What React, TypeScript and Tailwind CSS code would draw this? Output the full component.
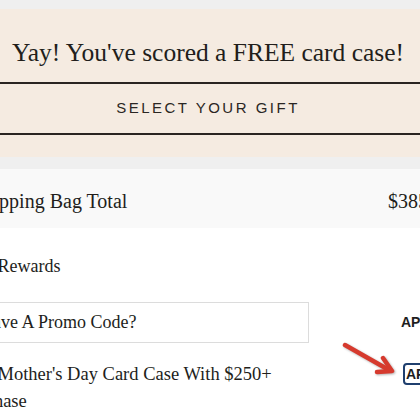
export default function App() {
  return (
    <div className="relative h-[420px] w-[420px] overflow-hidden bg-[#efefef] font-['Liberation_Serif',serif] text-[#221e1b]">
      {/* content is wider than the viewport, like a cropped page */}
      <div className="-ml-[32px] w-[480px]">
        <section className="mt-[9px] bg-[#f5ebe1] pt-[28px] pb-[22px]">
          <h2 className="text-center text-[25.5px] leading-[32px]">Yay! You've scored a FREE card case!</h2>
          <button className="mt-[13px] h-[53px] w-full border-y-2 border-[#2a2421] font-['Liberation_Sans',sans-serif] text-[15px] tracking-[2.5px] text-[#2a2623]">
            SELECT YOUR GIFT
          </button>
        </section>

        <div className="mt-[12px] grid h-[59px] grid-cols-[420px_1fr] bg-[#f9f9f9] pt-[18px] text-[20px] leading-[28px]">
          <span>Shopping Bag Total</span>
          <span>$385.00</span>
        </div>

        <div className="h-[200px] bg-white pt-[25px]">
          <h3 className="text-[18px] leading-[27px]">My Rewards</h3>

          <div className="mt-[22px] grid grid-cols-[341px_1fr] items-center gap-x-[92px]">
            <input
              className="h-[41px] border border-[#dcdcdc] bg-white pl-[11px] text-[18px] text-[#221e1b] outline-none placeholder:text-[#221e1b]"
              placeholder="Have A Promo Code?"
            />
            <button className="text-left font-['Liberation_Sans',sans-serif] text-[14px] font-bold text-[#1e1e1e]">APPLY</button>
          </div>

          <div className="mt-[18px] grid grid-cols-[341px_1fr] items-start gap-x-[92px]">
            <p className="-ml-[8px] text-[18.5px] leading-[27px]">Free Mother's Day Card Case With $250+ Purchase</p>
            <button className="mt-[2px] ml-[2px] h-[22px] w-[60px] rounded-[4px] border-2 border-[#1f3f6e] px-[1px] text-left font-['Liberation_Sans',sans-serif] text-[14px] leading-[18px] font-bold text-[#1e1e1e]">
              APPLY
            </button>
          </div>
        </div>
      </div>

      <svg
        className="pointer-events-none absolute inset-0 drop-shadow-[1px_1px_1px_rgba(0,0,0,0.3)]"
        width="420"
        height="420"
        viewBox="0 0 420 420"
      >
        <path d="M345 345 L389 370" stroke="#d63a2e" strokeWidth="4.5" strokeLinecap="round" fill="none" />
        <path d="M383 358 L392 371 L377 372" stroke="#d63a2e" strokeWidth="4.5" strokeLinecap="round" strokeLinejoin="round" fill="none" />
      </svg>
    </div>
  );
}
